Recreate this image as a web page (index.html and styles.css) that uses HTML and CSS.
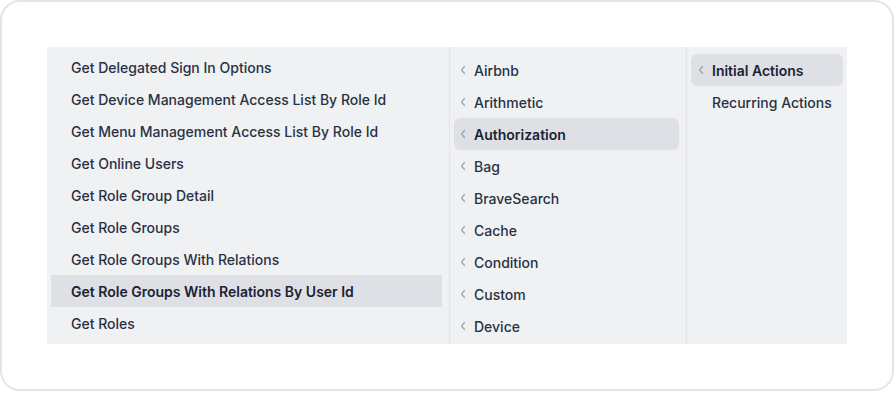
FILE: index.html
```html
<!DOCTYPE html>
<html>
<head>
<meta charset="utf-8">
<link rel="stylesheet" href="styles.css">
</head>
<body>
<div class="card">
  <div class="panel">
    <div class="col col-left">
      <div class="row">Get Delegated Sign In Options</div>
      <div class="row">Get Device Management Access List By Role Id</div>
      <div class="row">Get Menu Management Access List By Role Id</div>
      <div class="row">Get Online Users</div>
      <div class="row">Get Role Group Detail</div>
      <div class="row">Get Role Groups</div>
      <div class="row">Get Role Groups With Relations</div>
      <div class="row active">Get Role Groups With Relations By User Id</div>
      <div class="row">Get Roles</div>
    </div>
    <div class="col col-mid">
      <div class="row nav"><svg class="chev" viewBox="0 0 8 10"><polyline points="5.5,1.5 2.5,5 5.5,8.5"/></svg><span>Airbnb</span></div>
      <div class="row nav"><svg class="chev" viewBox="0 0 8 10"><polyline points="5.5,1.5 2.5,5 5.5,8.5"/></svg><span>Arithmetic</span></div>
      <div class="row nav active"><svg class="chev" viewBox="0 0 8 10"><polyline points="5.5,1.5 2.5,5 5.5,8.5"/></svg><span>Authorization</span></div>
      <div class="row nav"><svg class="chev" viewBox="0 0 8 10"><polyline points="5.5,1.5 2.5,5 5.5,8.5"/></svg><span>Bag</span></div>
      <div class="row nav"><svg class="chev" viewBox="0 0 8 10"><polyline points="5.5,1.5 2.5,5 5.5,8.5"/></svg><span>BraveSearch</span></div>
      <div class="row nav"><svg class="chev" viewBox="0 0 8 10"><polyline points="5.5,1.5 2.5,5 5.5,8.5"/></svg><span>Cache</span></div>
      <div class="row nav"><svg class="chev" viewBox="0 0 8 10"><polyline points="5.5,1.5 2.5,5 5.5,8.5"/></svg><span>Condition</span></div>
      <div class="row nav"><svg class="chev" viewBox="0 0 8 10"><polyline points="5.5,1.5 2.5,5 5.5,8.5"/></svg><span>Custom</span></div>
      <div class="row nav"><svg class="chev" viewBox="0 0 8 10"><polyline points="5.5,1.5 2.5,5 5.5,8.5"/></svg><span>Device</span></div>
    </div>
    <div class="col col-right">
      <div class="row nav active"><svg class="chev" viewBox="0 0 8 10"><polyline points="5.5,1.5 2.5,5 5.5,8.5"/></svg><span>Initial Actions</span></div>
      <div class="row nav"><svg class="chev hidden" viewBox="0 0 8 10"><polyline points="5.5,1.5 2.5,5 5.5,8.5"/></svg><span>Recurring Actions</span></div>
    </div>
  </div>
</div>
</body>
</html>
```

FILE: styles.css
```css
* { box-sizing: border-box; }
html, body { margin: 0; padding: 0; background: #ffffff; }
body {
  font-family: Inter, "Noto Sans", sans-serif;
  font-size: 14px;
  font-weight: 500;
  color: #283244;
}
.card {
  width: 894px;
  height: 391px;
  border: 2px solid #e3e5e9;
  border-radius: 20px;
  padding: 45px;
  background: #fff;
}
.panel {
  display: flex;
  height: 297px;
  background: #f0f1f3;
  overflow: hidden;
}
.col {
  display: flex;
  flex-direction: column;
  overflow: hidden;
}
.col-left {
  width: 403px;
  padding: 4px 7px 4px 4px;
  border-right: 1px solid #e2e4e8;
}
.col-mid {
  width: 237px;
  padding: 7px 7px 0 4px;
  border-right: 1px solid #e2e4e8;
}
.col-right {
  flex: 1;
  padding: 7px 4px 0 4px;
}
.row {
  flex: none;
  height: 32px;
  display: flex;
  align-items: center;
  padding-left: 20px;
  border-radius: 6px;
  white-space: nowrap;
}
.col-left .row { border-radius: 0; }
.row.nav { padding-left: 6px; }
.col-mid .row.nav { padding-left: 5px; }
.row.active {
  background: #dfe0e5;
  font-weight: 600;
  color: #1a2333;
}
.chev {
  width: 8px;
  height: 10px;
  margin-right: 7px;
  fill: none;
  stroke: #9ca2ad;
  stroke-width: 1.2;
  stroke-linecap: round;
  stroke-linejoin: round;
}
.chev.hidden { visibility: hidden; }
```
